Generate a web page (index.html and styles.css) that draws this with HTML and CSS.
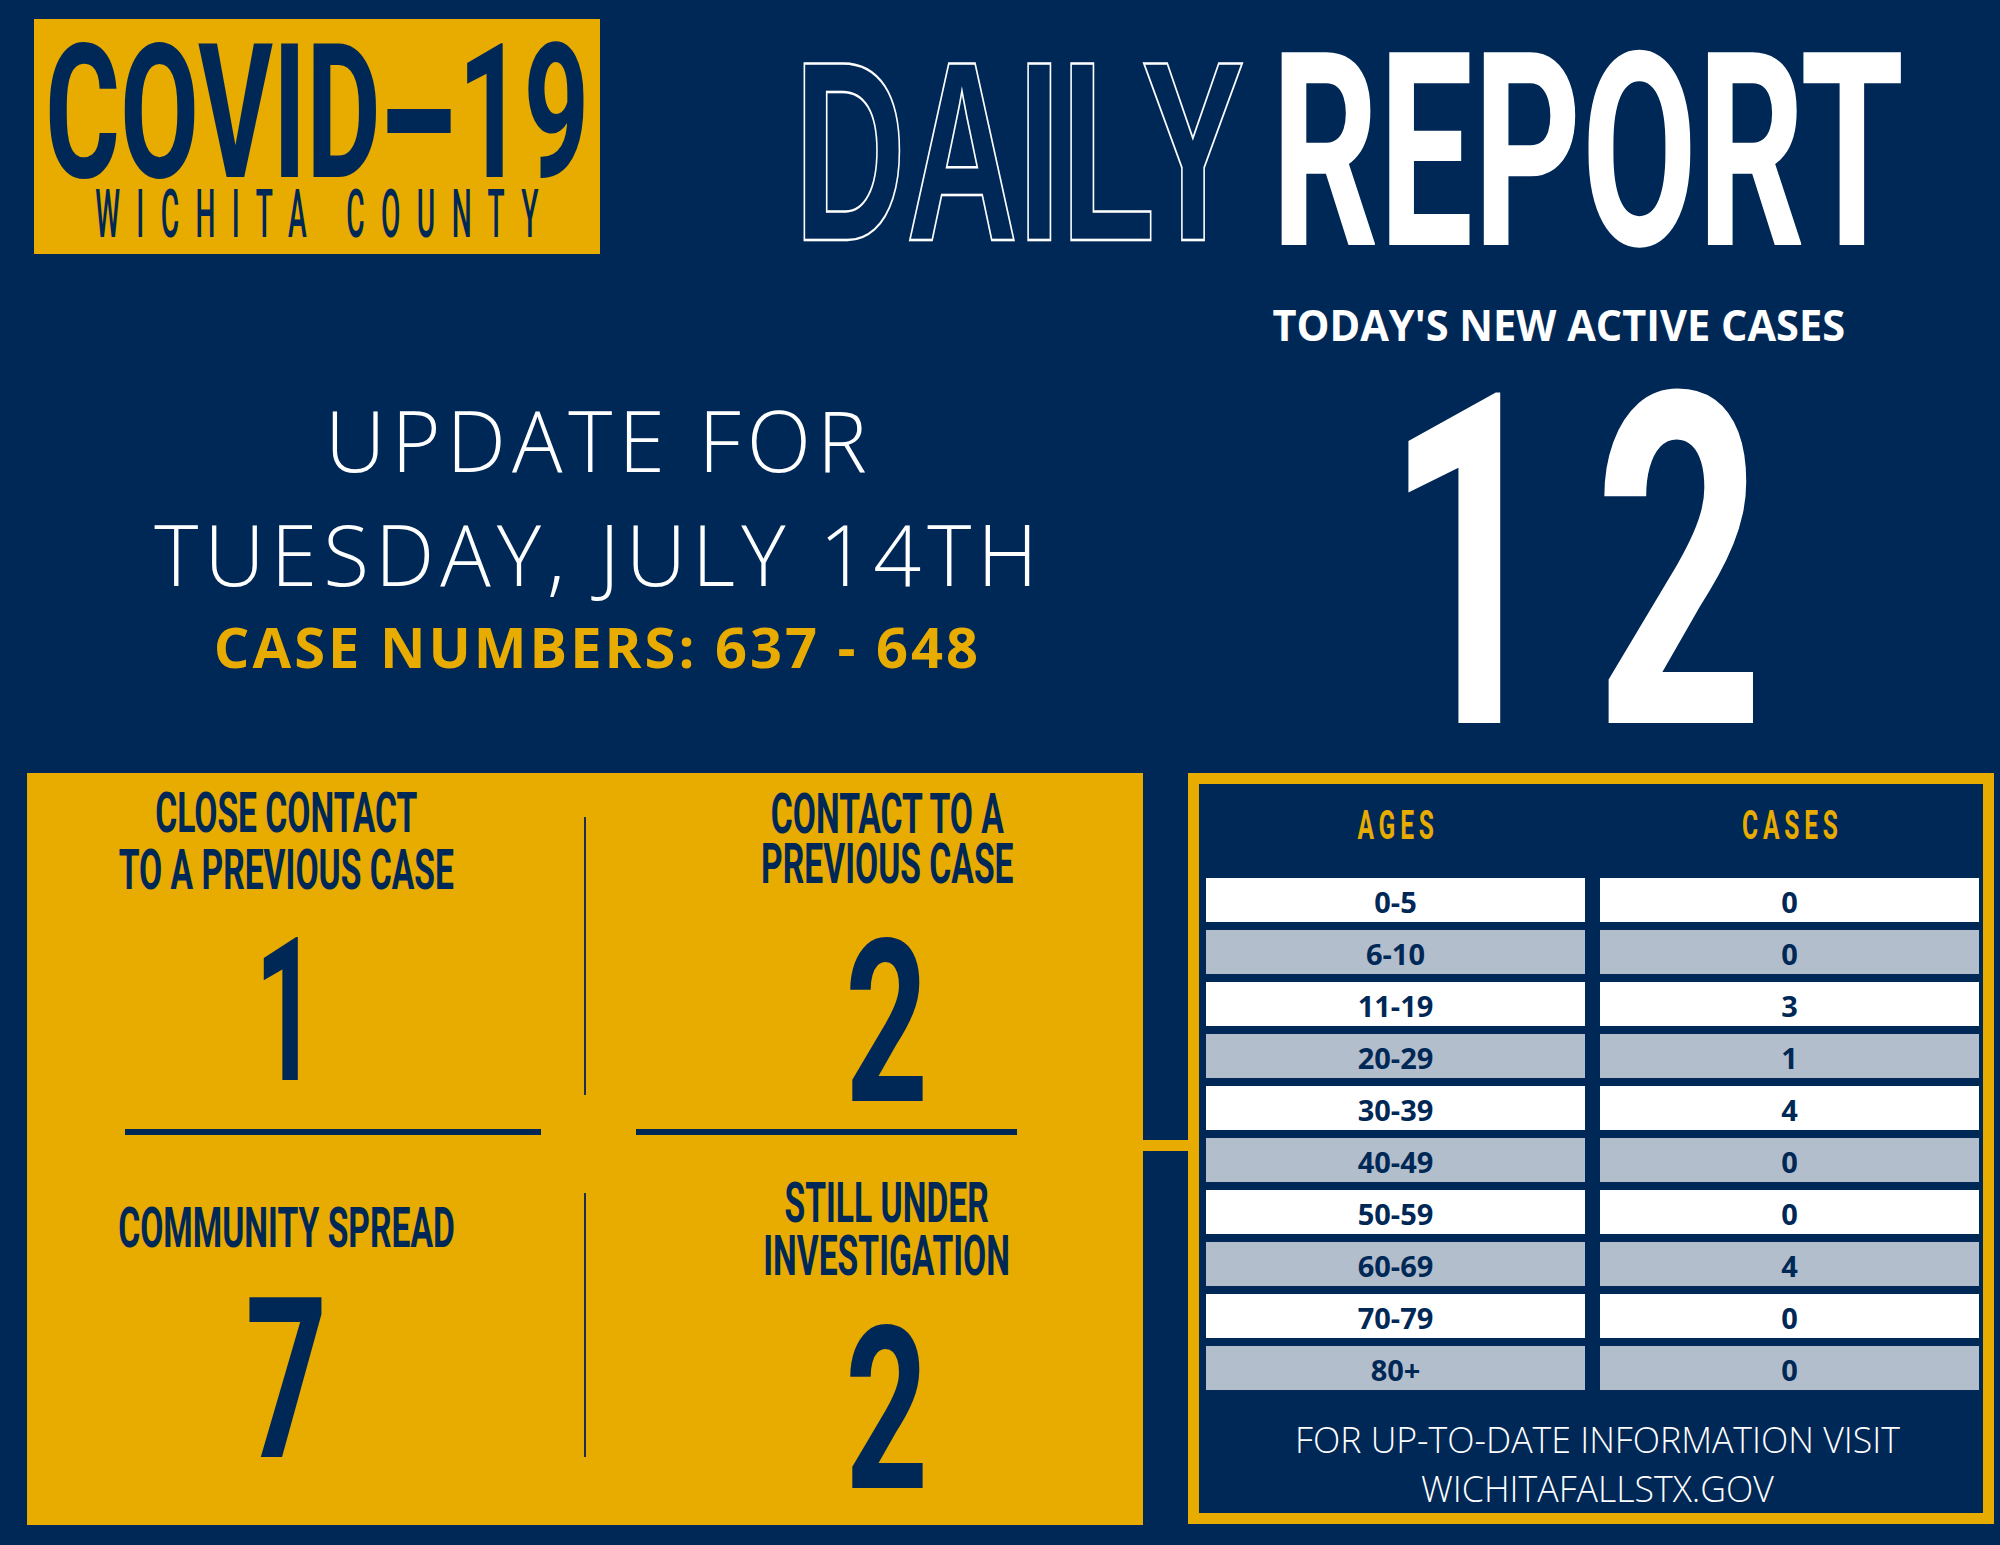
FILE: index.html
```html
<!DOCTYPE html>
<html lang="en">
<head>
<meta charset="utf-8">
<title>COVID-19 Daily Report</title>
<link rel="stylesheet" href="styles.css">
</head>
<body>
<main class="page">
  <header class="top">
    <div class="badge">
      <div class="fit covid"><span>COVID<span class="dash">-</span>19</span></div>
      <div class="fit county"><span>WICHITA COUNTY</span></div>
    </div>
    <h1 class="title">
      <span class="fit daily"><span>DAILY</span></span>
      <span class="fit report"><span>REPORT</span></span>
    </h1>
  </header>

  <section class="mid">
    <div class="update">
      <p class="update-line">UPDATE FOR</p>
      <p class="update-line">TUESDAY, JULY 14TH</p>
      <p class="case-range">CASE NUMBERS: 637 - 648</p>
    </div>
    <div class="active">
      <h2 class="fit active-label"><span>TODAY'S NEW ACTIVE CASES</span></h2>
      <div class="fit big-count"><span>12</span></div>
    </div>
  </section>

  <section class="bottom">
    <div class="quad">
      <div class="cell cell-l">
        <div class="fit label lbl-tl"><span>CLOSE CONTACT<br>TO A PREVIOUS CASE</span></div>
        <div class="fit num n1"><span>1</span></div>
      </div>
      <div class="vline vline-top"></div>
      <div class="cell cell-r">
        <div class="fit label lbl-tr"><span>CONTACT TO A<br>PREVIOUS CASE</span></div>
        <div class="fit num n2"><span>2</span></div>
      </div>

      <div class="rule rule-l"></div>
      <div class="rule rule-r"></div>

      <div class="cell cell-l">
        <div class="fit label lbl-bl"><span>COMMUNITY SPREAD</span></div>
        <div class="fit num n7"><span>7</span></div>
      </div>
      <div class="vline vline-bot"></div>
      <div class="cell cell-r">
        <div class="fit label lbl-br"><span>STILL UNDER<br>INVESTIGATION</span></div>
        <div class="fit num n2b"><span>2</span></div>
      </div>
    </div>

    <div class="connector"></div>

    <div class="ages">
      <div class="ages-head">
        <div class="fit head"><span>AGES</span></div>
        <div class="fit head"><span>CASES</span></div>
      </div>
      <div class="ages-grid">
        <div class="row-cell light">0-5</div><div class="row-cell light">0</div>
        <div class="row-cell grey">6-10</div><div class="row-cell grey">0</div>
        <div class="row-cell light">11-19</div><div class="row-cell light">3</div>
        <div class="row-cell grey">20-29</div><div class="row-cell grey">1</div>
        <div class="row-cell light">30-39</div><div class="row-cell light">4</div>
        <div class="row-cell grey">40-49</div><div class="row-cell grey">0</div>
        <div class="row-cell light">50-59</div><div class="row-cell light">0</div>
        <div class="row-cell grey">60-69</div><div class="row-cell grey">4</div>
        <div class="row-cell light">70-79</div><div class="row-cell light">0</div>
        <div class="row-cell grey">80+</div><div class="row-cell grey">0</div>
      </div>
      <p class="fit footer"><span>FOR UP-TO-DATE INFORMATION VISIT<br>WICHITAFALLSTX.GOV</span></p>
    </div>
  </section>
</main>
</body>
</html>
```

FILE: styles.css
```css
* { box-sizing: border-box; margin: 0; padding: 0; }

body {
  margin: 0;
  width: 2000px;
  height: 1545px;
  overflow: hidden;
  background: #002856;
  font-family: "Open Sans", sans-serif;
}

.page {
  width: 2000px;
  height: 1545px;
  display: flex;
  flex-direction: column;
  background: #002856;
}

/* generic "fit" text: centered, horizontally condensed */
.fit {
  display: flex;
  justify-content: center;
  white-space: nowrap;
}
.fit > span {
  flex: none;
  display: block;
  text-align: center;
}

/* ---------- top ---------- */
.top {
  flex: none;
  height: 260px;
  display: flex;
  align-items: flex-start;
}

.badge {
  margin: 19px 0 0 34px;
  width: 566px;
  height: 235px;
  background: #e8ab00;
  padding-top: 25px;
  display: flex;
  flex-direction: column;
  color: #002856;
}

.covid {
  font-family: Roboto, sans-serif;
  font-weight: 700;
  font-size: 188px;
  line-height: 0.74;
}
.covid > span { transform: scaleX(0.61); }
.covid .dash {
  display: inline-block;
  margin: 0 26px;
  transform: scale(2, 1.15);
}

.county {
  margin-top: 7px;
  font-family: Roboto, sans-serif;
  font-weight: 500;
  font-size: 67px;
  line-height: 0.74;
}
.county > span {
  letter-spacing: 39px;
  padding-left: 39px;
  transform: scaleX(0.42);
}

.title {
  display: flex;
  align-items: flex-start;
  gap: 34px;
  margin: 57px 0 0 197px;
  font-weight: 700;
}

.daily {
  width: 444px;
  font-family: "Liberation Sans", Arial, sans-serif;
  font-size: 256px;
  line-height: 0.74;
  color: transparent;
  -webkit-text-stroke: 2.5px #ffffff;
}
.daily > span { transform: scaleX(0.605); }

.report {
  width: 625px;
  margin-top: -4px;
  font-family: Roboto, sans-serif;
  font-size: 271px;
  line-height: 0.74;
  color: #ffffff;
}
.report > span { transform: scaleX(0.62); }

/* ---------- middle ---------- */
.mid {
  flex: none;
  height: 513px;
  display: grid;
  grid-template-columns: 1192px 734px;
}

.update {
  padding-top: 123px;
  text-align: center;
  color: #ffffff;
}

.update-line {
  font-weight: 300;
  font-size: 84px;
  line-height: 114px;
  letter-spacing: 6px;
  padding-left: 6px;
}

.case-range {
  margin-top: 7px;
  font-weight: 700;
  font-size: 56px;
  line-height: 56px;
  letter-spacing: 3px;
  padding-left: 3px;
  color: #e8ab00;
}

.active {
  padding-top: 43px;
}

.active-label {
  font-weight: 700;
  font-size: 43px;
  line-height: 43px;
  color: #ffffff;
}
.active-label > span { transform: scaleX(0.965); }

.big-count {
  margin-top: 47px;
  padding-left: 30px;
  font-family: Roboto, sans-serif;
  font-weight: 700;
  font-size: 464px;
  line-height: 0.74;
  color: #ffffff;
}
.big-count > span {
  letter-spacing: 62px;
  padding-left: 62px;
  transform: scaleX(0.64);
}

/* ---------- bottom ---------- */
.bottom {
  flex: none;
  height: 772px;
  display: flex;
  align-items: flex-start;
  padding-left: 27px;
}

.quad {
  width: 1116px;
  height: 752px;
  background: #e8ab00;
  display: grid;
  grid-template-columns: 557px 2px 557px;
  grid-template-rows: 356px 6px 390px;
  color: #002856;
}

.cell {
  display: flex;
  flex-direction: column;
  align-items: stretch;
}
.cell-l { padding-right: 39px; }
.cell-r { padding-left: 45px; }

.label {
  font-family: Roboto, sans-serif;
  font-weight: 700;
  font-size: 56px;
}
.label > span { transform: scaleX(0.6); }

.lbl-tl { line-height: 57px; margin-top: 12px; }
.lbl-tr { line-height: 50px; margin-top: 16px; }
.lbl-bl { line-height: 57px; margin-top: 65px; }
.lbl-br { line-height: 53px; margin-top: 42px; }

.num {
  font-family: Roboto, sans-serif;
  font-weight: 700;
  line-height: 0.74;
}
.num > span { transform: scaleX(0.64); }

.n1  { font-size: 200px; margin-top: 39px; }
.n1 > span { transform: scaleX(0.55); }
.n2  { font-size: 226px; margin-top: 51px; }
.n7  { font-size: 224px; margin-top: 41px; }
.n2b { font-size: 226px; margin-top: 44px; }

.vline {
  width: 2px;
  background: #1c2f52;
  align-self: start;
}
.vline-top { margin-top: 44px; height: 278px; }
.vline-bot { margin-top: 58px; height: 264px; }

.rule {
  height: 6px;
  background: #002856;
}
.rule-l { grid-column: 1; margin-left: 98px; width: 416px; }
.rule-r { grid-column: 3; margin-left: 50px; width: 381px; }

.connector {
  flex: none;
  width: 45px;
  height: 11px;
  margin-top: 367px;
  background: #e8ab00;
}

.ages {
  flex: none;
  width: 806px;
  height: 751px;
  border: 11px solid #e8ab00;
  padding: 0 4px 0 7px;
  display: flex;
  flex-direction: column;
  background: #002856;
}

.ages-head {
  height: 94px;
  padding-top: 26px;
  display: grid;
  grid-template-columns: 379px 379px;
  column-gap: 15px;
}

.head {
  font-family: Roboto, sans-serif;
  font-weight: 700;
  font-size: 41px;
  line-height: 0.74;
  color: #e8ab00;
}
.head > span {
  letter-spacing: 8px;
  padding-left: 8px;
  transform: scaleX(0.6);
}

.ages-grid {
  display: grid;
  grid-template-columns: 379px 379px;
  grid-auto-rows: 44px;
  column-gap: 15px;
  row-gap: 8px;
}

.row-cell {
  padding-top: 3px;
  font-weight: 700;
  font-size: 29px;
  line-height: 41px;
  text-align: center;
  color: #002856;
}
.light { background: #ffffff; }
.grey { background: #b3becc; }

.footer {
  margin-top: 25px;
  padding-left: 10px;
  font-weight: 300;
  font-size: 36px;
  line-height: 49px;
  color: #ffffff;
}
.footer > span { transform: scaleX(0.99); }
```
